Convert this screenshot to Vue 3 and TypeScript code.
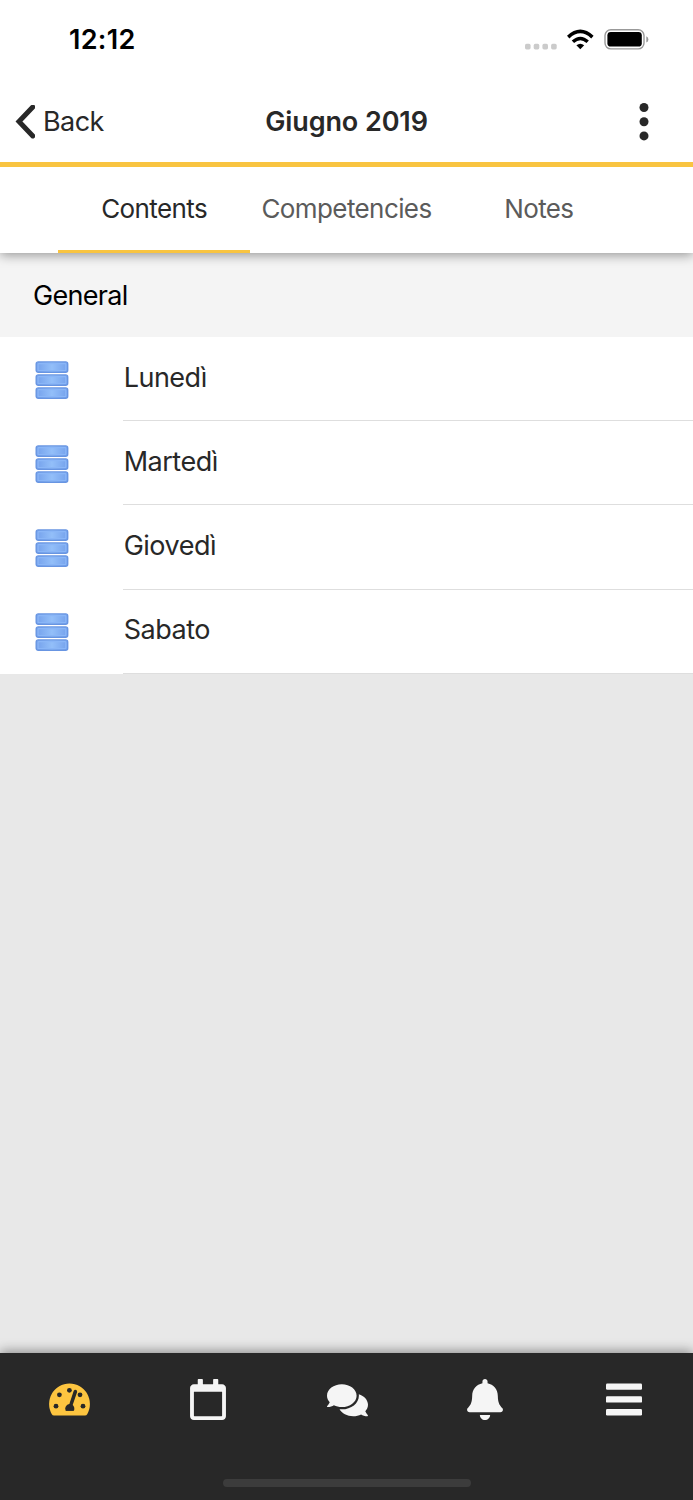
<script setup lang="ts">
const tabs: { label: string; cls: string; active?: boolean }[] = [
  { label: 'Contents', cls: 't-contents', active: true },
  { label: 'Competencies', cls: 't-comp' },
  { label: 'Notes', cls: 't-notes' },
]
const items: { label: string; cls: string }[] = [
  { label: 'Lunedì', cls: 'r1' },
  { label: 'Martedì', cls: 'r2' },
  { label: 'Giovedì', cls: 'r3' },
  { label: 'Sabato', cls: 'r4' },
]
</script>

<template>
  <div class="screen">
    <header class="top">
      <div class="status">
        <span class="time">12:12</span>
        <svg class="status-icons" width="126" height="24" viewBox="0 0 126 24">
          <g fill="#cbcbcb">
            <rect v-for="n in 4" :key="n" :x="1 + (n - 1) * 8.7" y="15.8" width="5.6" height="5.6" rx="1.6" />
          </g>
          <path d="M56.3 21.3 L52.4 17.3 Q56.3 14.2 60.2 17.3 Z" fill="#000" />
          <path d="M48.9 13.8 Q56.3 7.2 63.7 13.8" fill="none" stroke="#000" stroke-width="3.5" />
          <path d="M44.2 9.1 Q56.3 -2.2 68.4 9.1" fill="none" stroke="#000" stroke-width="3.5" />
          <rect x="81" y="1.7" width="39" height="19.2" rx="5.8" fill="none" stroke="#999" stroke-width="1.4" />
          <rect x="83.4" y="4" width="34.4" height="14.6" rx="3.4" fill="#000" />
          <path d="M122.3 8.2 Q124.4 9.2 124.4 11.4 Q124.4 13.6 122.3 14.6 Z" fill="#999" />
        </svg>
      </div>
      <div class="nav">
        <div class="back">
          <svg width="20" height="34" viewBox="0 0 20 34">
            <path d="M17.8 2.1 L4 16.500 L17.800 30.900" fill="none" stroke="#282828" stroke-width="5" stroke-linecap="round" stroke-linejoin="miter" />
          </svg>
          <span class="back-label">Back</span>
        </div>
        <span class="title">Giugno 2019</span>
        <svg class="more" width="10" height="40" viewBox="0 0 10 40">
          <circle cx="5" cy="5.500" r="4.500" fill="#282828" />
          <circle cx="5" cy="19.700" r="4.500" fill="#282828" />
          <circle cx="5" cy="33.900" r="4.500" fill="#282828" />
        </svg>
      </div>
      <nav class="tabs">
        <div v-for="t in tabs" :key="t.label" class="tab" :class="{ active: t.active }">
          <span :class="t.cls">{{ t.label }}</span>
        </div>
      </nav>
    </header>

    <main class="content">
      <div class="section"><span>General</span></div>
      <div v-for="r in items" :key="r.label" class="row">
        <svg class="db" width="34" height="38" viewBox="0 0 34 38">
          <defs>
            <linearGradient :id="'g-' + r.cls">
              <stop offset="0" stop-color="#74a1ec" />
              <stop offset="0.5" stop-color="#93bff9" />
              <stop offset="1" stop-color="#74a1ec" />
            </linearGradient>
          </defs>
          <g v-for="n in 3" :key="n" :transform="`translate(0 ${(n - 1) * 13})`">
            <rect x="1.2" y="0.9" width="31.500" height="10.400" rx="2" :fill="`url(#g-${r.cls})`" stroke="#6895e2" stroke-width="1.400" />
            <rect x="3.100" y="2.700" width="27.700" height="6.800" rx="0.600" fill="none" stroke="#8ab6f7" stroke-width="1.200" />
          </g>
        </svg>
        <div class="cell"><span :class="r.cls">{{ r.label }}</span></div>
      </div>
    </main>

    <footer class="bottom">
      <div class="icons">
        <svg width="41" height="41" viewBox="0 0 41 41">
          <path d="M20.5 4.5 A20.5 20.5 0 0 0 2.8 35.2 Q3.5 36.5 5 36.5 H36 Q37.5 36.5 38.2 35.2 A20.5 20.5 0 0 0 20.5 4.5 Z" fill="#fdc540" />
          <g fill="#282828">
            <circle cx="7" cy="27.2" r="2.4" />
            <circle cx="10.4" cy="15.8" r="2.4" />
            <circle cx="20.4" cy="11.3" r="2.4" />
            <circle cx="31" cy="15.8" r="2.4" />
            <circle cx="34" cy="27.2" r="2.4" />
          </g>
          <path d="M16.7 31.9 Q15.200 29 17.200 26.700 Q18.500 25.200 20.300 25 L24.600 12.100 Q25.300 10.300 26.900 10.800 Q28.600 11.400 28.100 13.200 L23.700 26 Q26.400 28.500 24.900 31.900 Z" fill="#282828" stroke="#fdc540" stroke-width="0.500" />
          <path d="M16.900 31.700 Q15.700 29 17.400 26.900 Q18.600 25.500 20.500 25.300 L24.800 12.200 Q25.400 10.600 26.800 11 Q28.300 11.600 27.900 13 L23.500 26 Q26 28.500 24.700 31.700 Z" fill="#282828" />
        </svg>
        <svg width="36" height="41" viewBox="0 0 448 512" fill="#f5f5f5">
          <path fill-rule="evenodd" d="M400 64h-48V12c0-6.600-5.400-12-12-12h-40c-6.600 0-12 5.400-12 12v52H160V12c0-6.600-5.400-12-12-12h-40c-6.600 0-12 5.400-12 12v52H48C21.500 64 0 85.500 0 112v352c0 26.500 21.500 48 48 48h352c26.500 0 48-21.500 48-48V112c0-26.500-21.500-48-48-48zm-6 400H54c-3.300 0-6-2.700-6-6V160h352v298c0 3.300-2.700 6-6 6z" />
        </svg>
        <svg class="chat" width="41" height="36.444" viewBox="0 0 576 512" fill="#f5f5f5">
          <path d="M416 192c0-88.400-93.100-160-208-160S0 103.600 0 192c0 34.300 14.100 65.900 38 92-13.400 30.200-35.500 54.200-35.800 54.500-2.200 2.300-2.800 5.700-1.500 8.700S4.800 352 8 352c36.600 0 66.900-12.300 88.700-25 32.200 15.700 70.300 25 111.300 25 114.900 0 208-71.600 208-160zm122 220c23.900-26 38-57.700 38-92 0-66.900-53.500-124.200-129.300-148.100.9 6.600 1.300 13.300 1.300 20.100 0 105.900-107.700 192-240 192-10.800 0-21.300-.8-31.700-1.900C207.800 439.600 281.800 480 368 480c41 0 79.100-9.200 111.300-25 21.800 12.700 52.100 25 88.700 25 3.200 0 6.100-1.900 7.300-4.800 1.300-2.900.7-6.300-1.500-8.700-.3-.3-22.400-24.200-35.800-54.500z" />
        </svg>
        <svg width="36" height="41" viewBox="0 0 448 512" fill="#f5f5f5">
          <path d="M224 512c35.320 0 63.970-28.650 63.970-64H160.030c0 35.350 28.650 64 63.970 64zm215.390-149.710c-19.320-20.760-55.470-51.990-55.470-154.290 0-77.700-54.480-139.900-127.940-155.160V32c0-17.670-14.320-32-31.980-32s-31.980 14.330-31.980 32v20.840C118.560 68.100 64.080 130.300 64.080 208c0 102.300-36.150 133.530-55.470 154.290-6 6.450-8.660 14.160-8.610 21.710.11 16.400 12.980 32 32.100 32h383.800c19.120 0 32-15.600 32.100-32 .05-7.550-2.610-15.270-8.610-21.710z" />
        </svg>
        <svg width="36" height="41" viewBox="0 0 36 41" fill="#f5f5f5">
          <rect y="4.600" width="36" height="6.200" rx="1.200" />
          <rect y="17.200" width="36" height="6.400" rx="1.200" />
          <rect y="30" width="36" height="6.400" rx="1.200" />
        </svg>
      </div>
      <div class="home-bar"></div>
    </footer>
  </div>
</template>

<style>
body { margin: 0; }
</style>

<style scoped>
.screen {
  width: 693px;
  height: 1500px;
  display: flex;
  flex-direction: column;
  overflow: hidden;
  background: #e8e8e8;
  color: #282828;
  font-family: Inter, "Liberation Sans", sans-serif;
  font-size: 27px;
  line-height: 34px;
}
.screen span { white-space: nowrap; }
.top {
  position: relative;
  z-index: 1;
  height: 253px;
  background: #fff;
  box-shadow: 0 2px 11px rgba(0, 0, 0, 0.4);
}
.status {
  height: 82px;
  box-sizing: border-box;
  padding: 23px 43px 0 69px;
  display: flex;
  justify-content: space-between;
}
.time { color: #000; font-weight: 600; font-size: 27px; letter-spacing: 0.3px; }
.status-icons { margin-top: 5px; }
.nav {
  height: 80px;
  border-bottom: 5px solid #f9c440;
  display: grid;
  grid-template-columns: 1fr auto 1fr;
  align-items: center;
  padding: 0 44px 0 15px;
  box-sizing: content-box;
}
.back { display: flex; align-items: center; gap: 8px; }
.back-label { letter-spacing: -0.6px; }
.title { font-weight: 600; margin-right: -29px; letter-spacing: -0.1px; }
.more { justify-self: end; }
.tabs { display: flex; height: 86px; padding: 0 58px; }
.tab {
  flex: 1;
  box-sizing: border-box;
  padding-top: 25px;
  text-align: center;
  color: #5b5b5b;
  border-bottom: 3px solid transparent;
  font-size: 26px;
  letter-spacing: -0.6px;
}
.tab.active { color: #282828; border-color: #f9c440; }
.content { flex: 1; }
.section {
  height: 84.300px;
  padding: 26px 33px 0;
  box-sizing: border-box;
  background: #f4f4f4;
  color: #000;
  letter-spacing: -0.7px;
}
.row {
  display: flex;
  height: 84.100px;
  background: #fff;
}
.db { margin: 23.700px 54px 0 35px; flex: none; }
.cell {
  flex: 1;
  box-sizing: border-box;
  border-bottom: 1px solid #dedede;
  padding: 23.700px 0 0 0.700px;
  letter-spacing: -0.5px;
}
.bottom {
  height: 147px;
  background: #282828;
  box-shadow: 0 -2px 11px rgba(0, 0, 0, 0.4);
  display: flex;
  flex-direction: column;
  align-items: center;
}
.icons {
  width: 100%;
  height: 126px;
  box-sizing: border-box;
  padding-top: 26.300px;
  display: grid;
  grid-template-columns: repeat(5, 1fr);
  justify-items: center;
}
.icons .chat { margin: 2.300px 0 0 1.400px; }
.home-bar { width: 248px; height: 8px; border-radius: 4px; background: #3c3c3c; }
</style>
